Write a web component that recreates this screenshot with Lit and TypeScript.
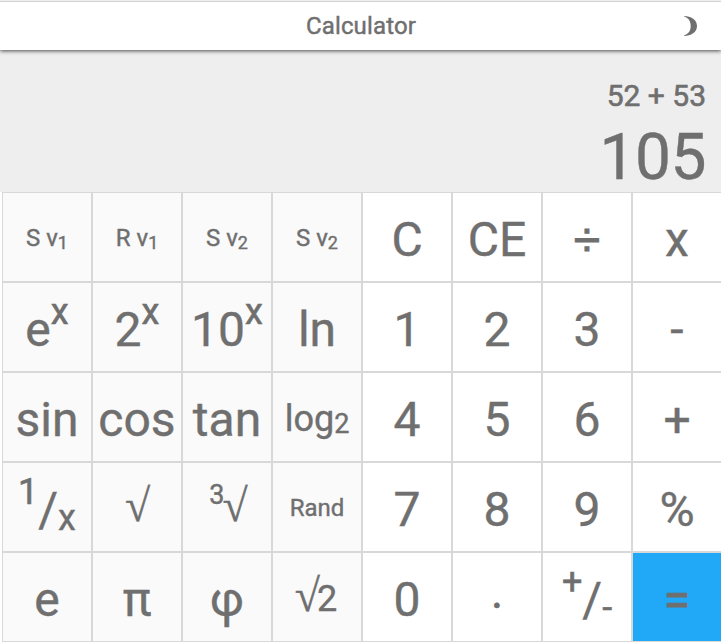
import { LitElement, html, css } from "lit";
import { customElement, property } from "lit/decorators.js";
import { classMap } from "lit/directives/class-map.js";

interface Part {
  text: string;
  kind?: string;
}

interface Key {
  parts: Part[];
  size: "sm" | "md" | "lg";
  tone?: "function" | "equals";
}

const key = (text: string, size: Key["size"] = "lg", tone?: Key["tone"]): Key => ({ parts: [{ text }], size, tone });
const fn = (size: Key["size"], ...parts: Part[]): Key => ({ parts, size, tone: "function" });
const t = (text: string, kind?: string): Part => ({ text, kind });

const KEYS: Key[] = [
  fn("sm", t("S v"), t("1", "sub")), fn("sm", t("R v"), t("1", "sub")),
  fn("sm", t("S v"), t("2", "sub")), fn("sm", t("S v"), t("2", "sub")),
  key("C"), key("CE"), { parts: [t("÷", "divide")], size: "lg" }, key("x"),

  fn("lg", t("e"), t("x", "sup")), fn("lg", t("2"), t("x", "sup")),
  fn("lg", t("10"), t("x", "sup")), fn("lg", t("ln")),
  key("1"), key("2"), key("3"), key("-"),

  fn("lg", t("sin")), fn("lg", t("cos")), fn("lg", t("tan")),
  fn("md", t("log"), t("2", "sub")),
  key("4"), key("5"), key("6"), key("+"),

  fn("lg", t("1", "sup"), t("/"), t("x", "sub")), fn("md", t("√", "root")),
  fn("md", t("3", "sup"), t("√", "root")), fn("sm", t("Rand")),
  key("7"), key("8"), key("9"), key("%"),

  fn("lg", t("e")), fn("lg", t("π")), fn("lg", t("φ")),
  fn("md", t("√", "root"), t("2")),
  key("0"), { parts: [t(".", "point")], size: "lg" },
  { parts: [t("+", "sup"), t("/"), t("-", "sub")], size: "lg" },
  key("=", "lg", "equals"),
];

@customElement("calc-key")
export class CalcKey extends LitElement {
  @property({ attribute: false }) data!: Key;

  static styles = css`
    :host { display: block; min-width: 0; }
    .key {
      box-sizing: border-box;
      width: 100%;
      height: 90px;
      border: 1px solid #d8d8d8;
      background: #fff;
      display: flex;
      justify-content: center;
      white-space: pre;
      line-height: 93px;
      font-size: 48px;
      -webkit-text-stroke: 0.4px currentColor;
    }
    .function { background: #fafafa; }
    .equals { background: #21a9f8; -webkit-text-stroke-width: 0.9px; }
    .md { font-size: 36px; line-height: 92px; }
    .sm { font-size: 24px; line-height: 90px; }
    .sup, .sub { font-size: 0.75em; line-height: 0; }
    .lg .sup { vertical-align: 22px; -webkit-text-stroke-width: 0.6px; }
    .lg .sub { vertical-align: -4px; }
    .md .sup { vertical-align: 17px; }
    .md .sub { vertical-align: -2px; }
    .sm .sub { vertical-align: -3px; }
    .root {
      font-family: "Liberation Serif", serif;
      font-size: 46px;
      line-height: 0;
      margin-left: -2px;
      margin-right: -3px;
      -webkit-text-stroke-width: 0.3px;
    }
    .divide {
      font-family: "Liberation Sans", sans-serif;
      line-height: 0;
      -webkit-text-stroke-width: 1px;
    }
    .point { vertical-align: 8px; line-height: 0; }
  `;

  render() {
    const { parts, size, tone } = this.data;
    return html`<div class=${classMap({ key: true, [size]: true, [tone ?? "plain"]: true })}><span>${parts.map(
      (p) => html`<span class=${p.kind ?? "base"}>${p.text}</span>`
    )}</span></div>`;
  }
}

@customElement("app-root")
export class AppRoot extends LitElement {
  static styles = css`
    :host {
      display: block;
      width: 721px;
      height: 642px;
      overflow: hidden;
      background: #fff;
      color: #6f6f6f;
      font-family: Roboto, sans-serif;
    }
    .bar {
      box-sizing: border-box;
      border-top: 1px solid #d3d3d3;
      margin-top: 1px;
      height: 49px;
      background: #fff;
      box-shadow: 0 1px 4px rgba(0, 0, 0, 0.7);
      clip-path: inset(0 0 -8px 0);
      display: grid;
      grid-template-columns: 1fr auto 1fr;
      align-items: center;
    }
    .top { background: #eee; height: 192px; display: flow-root; }
    .title {
      grid-column: 2;
      font-size: 24px;
      line-height: 28px;
      letter-spacing: 0.15px;
      padding-left: 1px;
      -webkit-text-stroke: 0.45px currentColor;
    }
    .moon { justify-self: end; margin-right: 24px; width: 13px; height: 20px; display: block; }
    .display { text-align: right; padding: 28px 15px 0 0; }
    .expression { font-size: 30px; line-height: 36px; -webkit-text-stroke: 0.6px currentColor; }
    .result {
      font-size: 64px;
      line-height: 87px;
      letter-spacing: -0.5px;
      -webkit-text-stroke: 0.4px currentColor;
    }
    .pad { display: grid; grid-template-columns: repeat(8, 90px); padding-left: 2px; }
  `;

  render() {
    return html`
      <div class="top">
        <header class="bar">
          <span class="title">Calculator</span>
          <svg class="moon" viewBox="0 0 13 20">
            <path d="M0 0C7 0 13 3.8 13 10S7 20 0 20V19.4C4.5 18 6.7 14.7 6.7 10S4.5 2 0 .6Z" fill="#6f6f6f" />
          </svg>
        </header>
        <div class="display">
          <div class="expression">52 + 53</div>
          <div class="result">105</div>
        </div>
      </div>
      <main class="pad">${KEYS.map((k) => html`<calc-key .data=${k}></calc-key>`)}</main>
    `;
  }
}
